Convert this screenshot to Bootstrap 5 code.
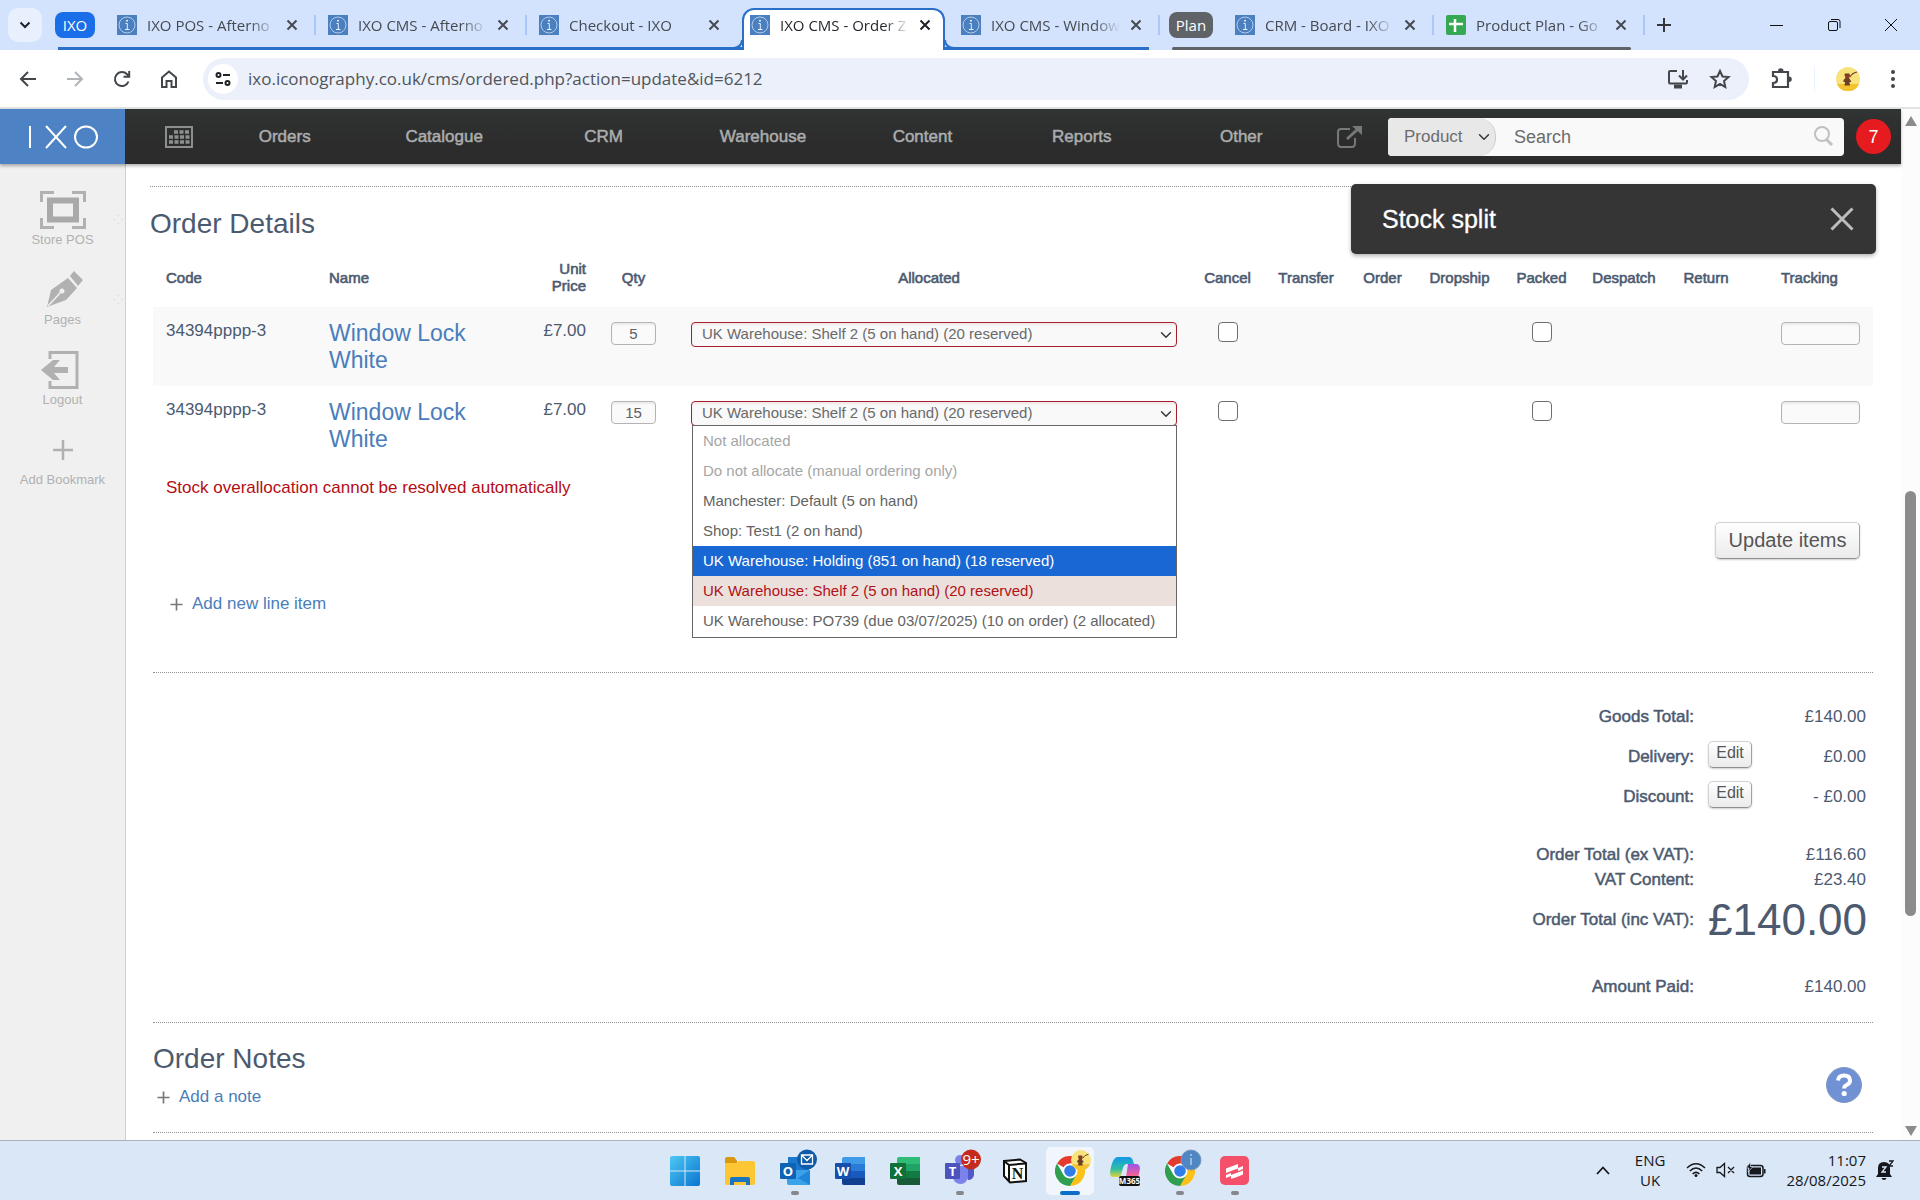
<!DOCTYPE html>
<html lang="en">
<head>
<meta charset="utf-8">
<meta name="viewport" content="width=device-width, initial-scale=1">
<title>IXO CMS - Order</title>
<link href="https://cdn.jsdelivr.net/npm/bootstrap@5.3.0/dist/css/bootstrap.min.css" rel="stylesheet">
<style>
  :root { --ink: #4c5a70; --blue: #4a7dba; --ui: "Open Sans", "Noto Sans", sans-serif; }
  body { font-family: "Liberation Sans", Arial, sans-serif; font-size: 17px; line-height: 24px; color: var(--ink); background: #fff; }
  a { text-decoration: none; color: var(--blue); }
  svg { display: block; flex: none; }
  .shell { height: 100vh; overflow: hidden; }
  button { font-family: inherit; }
  .plain { border: 0; background: none; padding: 0; color: inherit; }

  /* browser chrome */
  .tabstrip { height: 50px; background: #d3e2fd; font-family: var(--ui); font-size: 15px; color: #454a50; padding-left: 8px; }
  .tabsearch { width: 34px; height: 34px; border-radius: 10px; background: #e9f0fd; color: #1f2328; }
  .chip { height: 26px; border-radius: 8px; color: #fff; font-size: 15px; }
  .chip-ixo { background: #1a6ee8; width: 40px; margin-left: 13px; margin-right: 10px; }
  .chip-plan { background: #5f6368; width: 44px; margin-left: 9px; margin-right: 10px; }
  .grp { height: 50px; position: relative; }
  .grp::after { content: ""; position: absolute; left: 16px; right: 11px; bottom: 0; height: 3px; background: #2a70c8; }
  .grp-plan::after { left: 12px; right: 14px; background: #5f6368; border-radius: 2px; }
  .tab { width: 211px; height: 42px; margin-top: 4px; padding: 0 18px 0 12px; gap: 10px; position: relative; }
  .tab-name { flex: 1; overflow: hidden; white-space: nowrap; color: inherit; -webkit-mask-image: linear-gradient(90deg, #000 80%, transparent); }
  .tab.sep::after { content: ""; position: absolute; right: 0; top: 11px; width: 2px; height: 20px; background: #a8c7fa; }
  .tab-on { background: #fff; border: 2px solid #2a70c8; border-bottom: 0; border-radius: 12px 12px 0 0; height: 42px; margin: 8px 4px 0 4px; width: 203px; padding: 0 12px 10px 6px; z-index: 1; color: #1f2328; }
  .tab-on::before, .tab-on::after { content: ""; position: absolute; bottom: 0; width: 10px; height: 10px; border: solid #2a70c8; border-width: 0 0 3px 0; }
  .tab-on::before { left: -11px; border-right-width: 2px; border-bottom-right-radius: 10px; background: #d3e2fd; }
  .tab-on::after { right: -11px; border-left-width: 2px; border-bottom-left-radius: 10px; background: #d3e2fd; }
  .newtab { margin-left: 12px; }
  .winbtns { gap: 40px; padding-right: 21px; color: #111; }
  .toolbar { height: 59px; background: #fff; border-bottom: 2px solid #dfe3e3; padding: 0 19px 0 18px; color: #43474b; }
  .toolbar .icos { gap: 27px; }
  .omnibox { height: 42px; border-radius: 21px; background: #ebf0fa; font-family: var(--ui); font-size: 17px; margin: 0 22px 0 24px; padding: 0 18px 0 5px; gap: 20px; color: #1f2328; }
  .omnibox input { border: 0; background: none; outline: 0; color: #50555b; min-width: 0; margin-left: -10px; }
  .tune { width: 30px; height: 30px; border-radius: 50%; background: #fff; }
  .tools { gap: 21px; }

  /* application header */
  .apphead { height: 55px; background: linear-gradient(#303433, #2c2c2c 60%); box-shadow: 0 2px 3px rgba(0,0,0,.3); position: relative; z-index: 2; }
  .brand { width: 125px; height: 55px; background: #4d83c4; }
  .mainnav { width: 1116px; flex-shrink: 1; margin-left: 12px; }
  .mainnav a { flex: 1; text-align: center; color: #abadad; -webkit-text-stroke: .5px; }
  .searchbar { width: 456px; height: 38px; border-radius: 4px; background: #f9f9f9; overflow: hidden; margin-left: 26px; }
  .searchbar select { width: 108px; height: 38px; border: 0; border-radius: 0 18px 18px 0; border-right: 1px solid #ccc; background-color: #e8e8e8; color: #6c6c6c; font-size: 17px; padding: 0 24px 0 16px; background-size: 12px; background-position: right 5px center; }
  .searchbar input { border: 0; background: none; outline: 0; font-size: 18px; flex: 1; min-width: 0; padding-left: 18px; }
  .searchbar input::placeholder { color: #6c6c6c; }
  .count { width: 35px; height: 35px; border-radius: 50%; background: #e51b20; color: #fff; font-size: 18px; margin-left: 12px; margin-right: 10px; }
  .scroller { width: 19px; background: #fcfcfc; padding: 7px 0 4px; }
  .thumb { width: 11px; height: 425px; border-radius: 6px; background: #8b8b8b; margin-top: 155px; }

  /* side bar */
  .side { width: 126px; background: #f0f0f0; border-right: 1px solid #cfcfcf; padding-top: 25px; }
  .side a { height: 80px; color: #b1b1b1; font-size: 13px; line-height: 18px; position: relative; }
  .side svg { height: 40px; width: 46px; margin-bottom: 2px; }
  .grip { position: absolute; right: 1px; top: 22px; color: #dedede; font-size: 13px; line-height: 18px; }

  /* order page */
  .order { padding: 22px 28px 0 24px; background: #fff; position: relative; }
  .rule { border-top: 1px dotted #909090; }
  .inset { margin-left: 3px; }
  h2 { font-size: 28px; line-height: 34px; font-weight: 400; margin: 0; }
  h2.rule { padding-top: 20px; }
  .items { table-layout: fixed; width: 100%; margin-top: 6px; border-collapse: collapse; }
  .items th { height: 60px; font-weight: 400; font-size: 15px; line-height: 17px; -webkit-text-stroke: .6px; text-align: center; vertical-align: middle; }
  .items td { height: 79px; vertical-align: top; padding: 15px 0 0; text-align: center; line-height: 20px; }
  .items .txt, .items th.txt { text-align: left; padding: 14px 0 0 13px; }
  .items th.txt { padding-top: 0; }
  .items .money { text-align: right; padding: 14px 13px 0 0; }
  .items th.money { padding-top: 0; padding-left: 40px; }
  .items .last { padding: 15px 13px 0 35px; text-align: left; }
  .items th.last { padding-top: 0; padding-right: 0; }
  .items .shade td { background: #f9f9f9; }
  .items .prod { font-size: 23px; line-height: 27px; padding-top: 13px; }
  .items td svg, .items td input, .items td select { display: block; }
  .fld { height: 23px; border: 1px solid #b4b4b4; border-radius: 4px; background: #fafafa; box-shadow: inset 0 2px 2px rgba(0,0,0,.06); font-size: 15px; color: #606060; text-align: center; padding: 0 0 1px; }
  .qty { width: 45px; margin: 0 auto; }
  .alloc { position: relative; margin: 0 13px 0 23px; }
  .alloc select { height: 25px; width: 100%; border: 1px solid #a3212c; border-radius: 4px; background-color: #f9f9f9; box-shadow: inset 0 2px 2px rgba(160,30,40,.08); color: #6a6a6a; font-size: 15px; line-height: 21px; padding: 0 24px 2px 10px; background-size: 12px; background-position: right 4px center; }
  .drop { position: absolute; left: 1px; right: 0; top: 24px; background: #fff; border: 1px solid #666; z-index: 3; color: #636363; font-size: 15px; text-align: left; padding: 0 0 1px; margin: 0; list-style: none; }
  .drop li { line-height: 30px; padding-left: 10px; white-space: nowrap; }
  .drop .off { color: #a6a6a6; }
  .drop .hot { background: #1967d2; color: #fff; }
  .drop .bad { background: #ebe0dc; color: #b01116; }
  .tick { appearance: none; width: 20px; height: 20px; border: 1px solid #6e6e6e; border-radius: 4px; background: #fff; margin: 0 auto; }
  .warn { color: #b40d14; margin: 11px 0 0 13px; }
  .btn-soft { border: 1px solid #d2d2d2; border-right-color: #a0a0a0; border-bottom-color: #8f8f8f; border-radius: 5px; background: linear-gradient(#fff, #ebebeb); color: #555; box-shadow: 0 1px 2px rgba(0,0,0,.2); }
  .upd { font-size: 20px; height: 37px; width: 145px; padding: 0 0 2px; margin: 22px 13px 0 0; }
  .addline { gap: 9px; }
  .newitem { margin: 33px 0 56px 17px; }
  .newnote { margin: 9px 0 0 4px; }
  .totals { width: 460px; padding: 32px 7px 23px 0; margin-left: auto; }
  .totals > div { height: 24px; margin-bottom: 16px; }
  .totals dt { font-weight: 400; -webkit-text-stroke: .5px; }
  .totals dd { width: 172px; margin: 0; padding-left: 14px; }
  .totals .gap-l { margin-bottom: 34px; }
  .totals .gap-s { margin-bottom: 1px; }
  .totals .gap-xl { margin-bottom: 43px; }
  .totals .gap-0 { margin-bottom: 0; }
  .edit { font-size: 16px; line-height: 18px; width: 44px; height: 27px; padding: 0 0 3px; margin-top: -4px; }
  .grand { font-size: 44px; }
  .notes { padding: 19px 11px 23px 0; }
  .help { width: 36px; height: 36px; margin-bottom: 6px; }
  .toast-box { position: absolute; right: 25px; top: 20px; width: 525px; height: 70px; border-radius: 5px; background: #353535; color: #fff; font-size: 25px; padding: 0 22px 0 31px; box-shadow: 0 2px 4px rgba(0,0,0,.3); z-index: 4; -webkit-text-stroke: .3px; }

  /* task bar */
  .taskbar { height: 60px; border-top: 1px solid #a9b4be; background: #d9e7f7; font-family: var(--ui); color: #15181c; position: relative; }
  .apps { gap: 7px; }
  .app { width: 48px; height: 48px; border-radius: 5px; position: relative; margin: 6px 0; }
  .app.on { background: #f1f6fc; }
  .app svg { overflow: visible; }
  .run::after { content: ""; position: absolute; bottom: 0; left: 20px; width: 8px; height: 4px; border-radius: 2px; background: #83878c; }
  .app.on::after { content: ""; position: absolute; bottom: 0; left: 14px; width: 20px; height: 4px; border-radius: 2px; background: #0b6fc7; }
  .tray { position: absolute; right: 26px; top: 0; height: 58px; font-size: 15px; line-height: 20px; }
  .lang { margin: 0 21px 0 25px; }
  .net { gap: 10px; }
  .clock { margin: 0 10px 0 20px; }
</style>
</head>
<body>
<svg width="0" height="0" class="position-absolute">
  <symbol id="fav" viewBox="0 0 20 20"><rect width="20" height="20" fill="#4a7fc0"/><circle cx="10" cy="10" r="8" fill="none" stroke="#b5cbe6"/><path d="M8.500 8.500H10.300V14.500M8 14.500H12.500" fill="none" stroke="#e8f0fa"/><circle cx="10" cy="5.800" r="1" fill="#e8f0fa"/></symbol>
  <symbol id="ex" viewBox="0 0 12 12"><path d="M1.500 1.500 10.500 10.500M10.500 1.500 1.500 10.500" stroke="currentColor" stroke-width="2" fill="none"/></symbol>
  <symbol id="plus" viewBox="0 0 14 14"><path d="M7 .5V13.500M.5 7H13.500" stroke="currentColor" stroke-width="1.800"/></symbol>
  <symbol id="chrome" viewBox="0 0 30 30"><circle cx="15" cy="15" r="15" fill="#fff"/><path d="M15 15 2 7.500A15 15 0 0 1 28 7.500H15Z" fill="#e33b2e"/><path d="M28 7.500A15 15 0 0 1 15 30L21.500 18.700 15 7.500Z" fill="#fbc116"/><path d="M2 7.500A15 15 0 0 0 15 30L21.500 18.700H8.500Z" fill="#2f9e4f"/><circle cx="15" cy="15" r="7.500" fill="#fff"/><circle cx="15" cy="15" r="5.800" fill="#2f7de9"/></symbol>
  <symbol id="mule" viewBox="0 0 24 24"><circle cx="12" cy="12" r="12" fill="#f8e27c"/><path d="M1 17A12 12 0 0 0 23 17Z" fill="#f3c32f"/><path d="M8.500 8 9 6.500H13.500L14 9 13 11 15 14V15H13.500L14 18.500H8.500L9 15H7.500V13L9.500 11Z" fill="#6b4023"/><path d="M14 10Q16 6 21 5" stroke="#6d4a2a" stroke-width="1.200" fill="none"/><path d="M9 9.500H13.500" stroke="#b3341f" stroke-width="1.500"/></symbol>
</svg>

<div class="shell d-flex flex-column">
  <div class="tabstrip d-flex align-items-center flex-shrink-0">
    <button class="plain tabsearch d-flex align-items-center justify-content-center" aria-label="Search tabs"><svg width="12" height="8"><path d="M1.500 1.500 6 6 10.500 1.500" fill="none" stroke="currentColor" stroke-width="2"/></svg></button>
    <div class="grp d-flex align-items-center">
      <button class="plain chip chip-ixo">IXO</button>
      <div class="tab sep d-flex align-items-center align-self-start"><svg width="20" height="20"><use href="#fav"/></svg><a class="tab-name" href="#">IXO POS - Afterno</a><button class="plain" aria-label="Close"><svg width="12" height="12"><use href="#ex"/></svg></button></div>
      <div class="tab sep d-flex align-items-center align-self-start"><svg width="20" height="20"><use href="#fav"/></svg><a class="tab-name" href="#">IXO CMS - Afterno</a><button class="plain" aria-label="Close"><svg width="12" height="12"><use href="#ex"/></svg></button></div>
      <div class="tab d-flex align-items-center align-self-start"><svg width="20" height="20"><use href="#fav"/></svg><a class="tab-name" href="#">Checkout - IXO</a><button class="plain" aria-label="Close"><svg width="12" height="12"><use href="#ex"/></svg></button></div>
      <div class="tab tab-on d-flex align-items-center align-self-start"><svg width="20" height="20"><use href="#fav"/></svg><a class="tab-name" href="#">IXO CMS - Order Z</a><button class="plain" aria-label="Close"><svg width="12" height="12"><use href="#ex"/></svg></button></div>
      <div class="tab sep d-flex align-items-center align-self-start"><svg width="20" height="20"><use href="#fav"/></svg><a class="tab-name" href="#">IXO CMS - Window</a><button class="plain" aria-label="Close"><svg width="12" height="12"><use href="#ex"/></svg></button></div>
    </div>
    <div class="grp grp-plan d-flex align-items-center">
      <button class="plain chip chip-plan">Plan</button>
      <div class="tab sep d-flex align-items-center align-self-start"><svg width="20" height="20"><use href="#fav"/></svg><a class="tab-name" href="#">CRM - Board - IXO</a><button class="plain" aria-label="Close"><svg width="12" height="12"><use href="#ex"/></svg></button></div>
      <div class="tab sep d-flex align-items-center align-self-start"><svg width="20" height="20" viewBox="0 0 20 20"><rect width="20" height="20" rx="2" fill="#34a853"/><path d="M9 4V17M3 9H17" stroke="#fff" stroke-width="2.500"/></svg><a class="tab-name" href="#">Product Plan - Go</a><button class="plain" aria-label="Close"><svg width="12" height="12"><use href="#ex"/></svg></button></div>
    </div>
    <button class="plain newtab" aria-label="New tab"><svg width="14" height="14" viewBox="0 0 14 14"><path d="M7 0V14M0 7H14" stroke="#33373b" stroke-width="2"/></svg></button>
    <div class="winbtns d-flex align-items-center ms-auto">
      <button class="plain" aria-label="Minimise"><svg width="16" height="16"><path d="M1 8.500H14" stroke="currentColor"/></svg></button>
      <button class="plain" aria-label="Restore"><svg width="18" height="16" fill="none" stroke="currentColor"><rect x="3.500" y="4.500" width="9" height="9" rx="1.500"/><path d="M6 2.500H13A2 2 0 0 1 15 4.500V11"/></svg></button>
      <button class="plain" aria-label="Close window"><svg width="16" height="16"><path d="M2 2 14 14M14 2 2 14" stroke="currentColor"/></svg></button>
    </div>
  </div>

  <div class="toolbar d-flex align-items-center flex-shrink-0">
    <div class="icos d-flex">
      <button class="plain" aria-label="Back"><svg width="20" height="20" fill="none" stroke="currentColor" stroke-width="2"><path d="M18 10H3M10 3 3 10 10 17"/></svg></button>
      <button class="plain" aria-label="Forward"><svg width="20" height="20" fill="none" stroke="#b0b4b8" stroke-width="2"><path d="M2 10H17M10 3 17 10 10 17"/></svg></button>
      <button class="plain" aria-label="Reload"><svg width="20" height="20" fill="none" stroke="currentColor" stroke-width="2"><path d="M16.500 12.500A7 7 0 1 1 15 5.200L17 7.500M17.200 2V7.700H11.500"/></svg></button>
      <button class="plain" aria-label="Home"><svg width="20" height="20" fill="none" stroke="currentColor" stroke-width="2"><path d="M3 8.500 10 2.500 17 8.500V18H12.500V12H7.500V18H3Z"/></svg></button>
    </div>
    <div class="omnibox d-flex align-items-center flex-grow-1">
      <span class="tune d-flex align-items-center justify-content-center"><svg width="16" height="14" fill="none" stroke="#1f2328" stroke-width="2"><circle cx="3.500" cy="3" r="2"/><path d="M8 3H15M1 11H8"/><circle cx="12.500" cy="11" r="2"/></svg></span>
      <input class="flex-grow-1 p-0" aria-label="Address" value="ixo.iconography.co.uk/cms/ordered.php?action=update&amp;id=6212">
      <svg width="22" height="20" fill="none" stroke="#43474b" stroke-width="2"><path d="M10 2H3Q2 2 2 3V13Q2 14.500 3 14.500H19Q20 14.500 20 13V11M16 1V10M12 6.500 16 10.500 20 6.500"/><path d="M7 17.500H15" stroke-width="4"/></svg>
      <svg width="22" height="20" viewBox="0 0 22 20"><path d="M11 2 13.500 7.500 19.500 8 15 12 16.300 18 11 14.800 5.700 18 7 12 2.500 8 8.500 7.500Z" fill="none" stroke="#43474b" stroke-width="2"/></svg>
    </div>
    <div class="tools d-flex align-items-center">
      <svg width="22" height="24" viewBox="0 0 22 24"><path d="M2 5H17V20H2V16Q6 16 6 12.500 6 9 2 9Z" fill="none" stroke="#43474b" stroke-width="2.200"/><path d="M7 4A2.700 2.700 0 0 1 12.500 4M18 9.500A2.700 2.700 0 0 1 18 15" fill="#43474b"/></svg>
      <span class="vr" style="background:#a8c7fa"></span>
      <svg width="24" height="24" viewBox="0 0 24 24"><use href="#mule"/></svg>
      <svg class="ms-1" width="16" height="20"><circle cx="8" cy="3" r="2" fill="#43474b"/><circle cx="8" cy="10" r="2" fill="#43474b"/><circle cx="8" cy="17" r="2" fill="#43474b"/></svg>
    </div>
  </div>

  <div class="d-flex flex-grow-1" style="min-height:0">
    <div class="d-flex flex-column flex-grow-1" style="min-width:0">
      <header class="apphead d-flex align-items-center flex-shrink-0">
        <a class="brand d-flex align-items-center justify-content-center" href="#" aria-label="IXO"><svg width="70" height="24" fill="none" stroke="#fff" stroke-width="2"><path d="M2 1V23M18 1 38 23M38 1 18 23"/><ellipse cx="58" cy="12" rx="11" ry="10.500"/></svg></a>
        <a href="#" class="ps-4" aria-label="Calendar"><svg class="ms-3" width="28" height="22" viewBox="0 0 28 22"><rect x="1" y="1" width="26" height="20" fill="none" stroke="#8d8f8f" stroke-width="2"/><path d="M9 6H25M4 11H25M4 16H25" stroke="#8d8f8f" stroke-width="3.500" stroke-dasharray="4 1.500"/></svg></a>
        <nav class="mainnav d-flex"><a href="#">Orders</a><a href="#">Catalogue</a><a href="#">CRM</a><a href="#">Warehouse</a><a href="#">Content</a><a href="#">Reports</a><a href="#">Other</a></nav>
        <a href="#" class="ms-auto" aria-label="Open site"><svg width="25" height="22" viewBox="0 0 25 22" fill="none" stroke="#777979" stroke-width="2"><path d="M13 3H4Q1 3 1 6V17Q1 21 4 21H15Q18 21 18 17V12"/><path d="M10 13 21 3" stroke-width="3"/><path d="M15 0H25V9Z" fill="#777979" stroke="none"/></svg></a>
        <div class="searchbar d-flex align-items-center">
          <select class="form-select" aria-label="Search in"><option>Product</option></select>
          <input type="search" placeholder="Search" aria-label="Search">
          <svg class="me-2" width="24" height="24" fill="none" stroke="#c0c0c0"><circle cx="10" cy="9" r="7" stroke-width="2"/><path d="M14 14 20 20" stroke-width="3"/></svg>
        </div>
        <a class="count d-flex align-items-center justify-content-center" href="#">7</a>
      </header>

      <div class="d-flex flex-grow-1" style="min-height:0">
        <aside class="side flex-shrink-0">
          <a href="#" class="d-flex flex-column align-items-center"><svg viewBox="0 0 46 40"><path d="M1.500 13V3.500H14M32 3.500H44.500V13M44.500 29V38.500H32M14 38.500H1.500V29" fill="none" stroke="currentColor" stroke-width="3"/><rect x="10" y="11.500" width="26" height="19" fill="none" stroke="#a9a9a9" stroke-width="6"/></svg>Store POS<span class="grip">⁘</span></a>
          <a href="#" class="d-flex flex-column align-items-center"><svg viewBox="0 0 46 40"><path d="M7 38 11 21 28 9 37 19 26 31ZM30 7 34 2 43 11 38 17Z" fill="currentColor"/><path d="M8 37 21 23" stroke="#f0f0f0" stroke-width="1.500"/><circle cx="22" cy="22" r="2.500" fill="#f0f0f0"/></svg>Pages<span class="grip">⁘</span></a>
          <a href="#" class="d-flex flex-column align-items-center"><svg viewBox="0 0 46 40"><path d="M10 10V3.500H37V38.500H10V32" fill="none" stroke="currentColor" stroke-width="3"/><path d="M1 21 13 11H20L14 18H28V24H14L20 31H13Z" fill="currentColor"/></svg>Logout</a>
          <a href="#" class="d-flex flex-column align-items-center"><svg viewBox="0 0 46 40"><path d="M23 11V31M13 21H33" stroke="#b1b1b1" stroke-width="2.500"/></svg>Add Bookmark</a>
        </aside>

        <main class="order flex-grow-1" style="min-width:0">
          <h2 class="rule">Order Details</h2>
          <div class="inset">
            <table class="items">
              <colgroup><col width="163"><col width="185"><col width="98"><col width="69"><col><col width="75"><col width="82"><col width="71"><col width="83"><col width="81"><col width="84"><col width="80"><col width="127"></colgroup>
              <thead><tr><th class="txt">Code</th><th class="txt">Name</th><th class="money">Unit Price</th><th>Qty</th><th>Allocated</th><th>Cancel</th><th>Transfer</th><th>Order</th><th>Dropship</th><th>Packed</th><th>Despatch</th><th>Return</th><th class="last">Tracking</th></tr></thead>
              <tbody>
                <tr class="shade"><td class="txt">34394pppp-3</td><td class="txt prod"><a href="#">Window Lock White</a></td><td class="money">£7.00</td>
                  <td><input class="fld qty" aria-label="Qty" value="5"></td>
                  <td><div class="alloc"><select class="form-select" aria-label="Allocated"><option>UK Warehouse: Shelf 2 (5 on hand) (20 reserved)</option></select></div></td>
                  <td><input type="checkbox" class="tick" aria-label="Cancel"></td><td></td><td></td><td></td>
                  <td><input type="checkbox" class="tick" aria-label="Packed"></td><td></td><td></td>
                  <td class="last"><input class="fld w-100" aria-label="Tracking"></td></tr>
                <tr><td class="txt">34394pppp-3</td><td class="txt prod"><a href="#">Window Lock White</a></td><td class="money">£7.00</td>
                  <td><input class="fld qty" aria-label="Qty" value="15"></td>
                  <td><div class="alloc"><select class="form-select" aria-label="Allocated"><option>UK Warehouse: Shelf 2 (5 on hand) (20 reserved)</option></select>
                    <ul class="drop" role="listbox">
                      <li class="off" role="option">Not allocated</li>
                      <li class="off" role="option">Do not allocate (manual ordering only)</li>
                      <li role="option">Manchester: Default (5 on hand)</li>
                      <li role="option">Shop: Test1 (2 on hand)</li>
                      <li class="hot" role="option">UK Warehouse: Holding (851 on hand) (18 reserved)</li>
                      <li class="bad" role="option">UK Warehouse: Shelf 2 (5 on hand) (20 reserved)</li>
                      <li role="option">UK Warehouse: PO739 (due 03/07/2025) (10 on order) (2 allocated)</li>
                    </ul></div></td>
                  <td><input type="checkbox" class="tick" aria-label="Cancel"></td><td></td><td></td><td></td>
                  <td><input type="checkbox" class="tick" aria-label="Packed"></td><td></td><td></td>
                  <td class="last"><input class="fld w-100" aria-label="Tracking"></td></tr>
              </tbody>
            </table>
            <p class="warn">Stock overallocation cannot be resolved automatically</p>
            <div class="text-end"><button class="btn btn-soft upd">Update items</button></div>
            <a class="addline newitem d-flex align-items-center" href="#"><svg width="13" height="13" color="#777"><use href="#plus"/></svg>Add new line item</a>

            <div class="rule">
              <dl class="totals mb-0">
                <div class="d-flex justify-content-end"><dt>Goods Total:</dt><dd class="text-end">£140.00</dd></div>
                <div class="d-flex justify-content-end"><dt>Delivery:</dt><dd class="d-flex justify-content-between"><button class="btn btn-soft edit">Edit</button>£0.00</dd></div>
                <div class="d-flex justify-content-end gap-l"><dt>Discount:</dt><dd class="d-flex justify-content-between"><button class="btn btn-soft edit">Edit</button>- £0.00</dd></div>
                <div class="d-flex justify-content-end gap-s"><dt>Order Total (ex VAT):</dt><dd class="text-end">£116.60</dd></div>
                <div class="d-flex justify-content-end"><dt>VAT Content:</dt><dd class="text-end">£23.40</dd></div>
                <div class="d-flex justify-content-end align-items-center gap-xl"><dt>Order Total (inc VAT):</dt><dd class="text-end grand">£140.00</dd></div>
                <div class="d-flex justify-content-end gap-0"><dt>Amount Paid:</dt><dd class="text-end">£140.00</dd></div>
              </dl>
            </div>

            <section class="rule notes d-flex justify-content-between align-items-end">
              <div>
                <h2>Order Notes</h2>
                <a class="addline newnote d-flex align-items-center" href="#"><svg width="13" height="13" color="#777"><use href="#plus"/></svg>Add a note</a>
              </div>
              <button class="plain help" aria-label="Help"><svg width="36" height="36"><circle cx="18" cy="18" r="17.500" fill="#7092d4" stroke="#8399c0"/><path d="M12 13.500Q12.500 8.500 18 8.500 24 8.500 24 13.500 24 16.500 20.500 18 18.200 19 18.200 21.500" fill="none" stroke="#fff" stroke-width="4"/><circle cx="18.200" cy="26.500" r="2.600" fill="#fff"/></svg></button>
            </section>
            <div class="rule"></div>
          </div>
          <div class="toast-box d-flex align-items-center justify-content-between" role="alert">Stock split<button class="plain" aria-label="Dismiss"><svg width="24" height="24"><path d="M1.500 1.500 22.500 22.500M22.500 1.500 1.500 22.500" stroke="#bdbdbd" stroke-width="3"/></svg></button></div>
        </main>
      </div>
    </div>
    <div class="scroller d-flex flex-column align-items-center justify-content-between flex-shrink-0">
      <svg width="12" height="10"><path d="M6 0 12 10H0Z" fill="#8b8b8b"/></svg>
      <div class="thumb"></div>
      <svg width="12" height="10"><path d="M6 10 12 0H0Z" fill="#8b8b8b"/></svg>
    </div>
  </div>

  <footer class="taskbar flex-shrink-0">
    <div class="apps d-flex justify-content-center">
      <a href="#" class="app d-flex align-items-center justify-content-center" aria-label="Start"><svg width="30" height="30" viewBox="0 0 30 30"><defs><linearGradient id="w" x2="1" y2="1"><stop stop-color="#4cc8f4"/><stop offset="1" stop-color="#0a74cf"/></linearGradient></defs><path d="M2 0H14.500V14.500H0V2Q0 0 2 0ZM15.500 0H28Q30 0 30 2V14.500H15.500ZM0 15.500H14.500V30H2Q0 30 0 28ZM15.500 15.500H30V28Q30 30 28 30H15.500Z" fill="url(#w)"/></svg></a>
      <a href="#" class="app d-flex align-items-center justify-content-center" aria-label="Explorer"><svg width="30" height="28" viewBox="0 0 30 28"><path d="M0 2Q0 0 2 0H9L12 3.500V9H0Z" fill="#d9980f"/><path d="M0 6H12L14 4H28Q30 4 30 6V26Q30 28 28 28H2Q0 28 0 26Z" fill="#fcc634"/><path d="M5 28V22Q5 20 7 20H23Q25 20 25 22V28H21V25H9V28Z" fill="#1a74c0"/></svg></a>
      <a href="#" class="app run d-flex align-items-center justify-content-center" aria-label="Outlook"><svg width="30" height="28" viewBox="0 0 30 28"><rect x="8" width="21" height="20" fill="#1a78cf"/><path d="M7 13H30V28H9Q7 28 7 26Z" fill="#3ba2ea"/><path d="M30 13 18 21 30 28Z" fill="#1f86d8"/><rect y="6" width="16" height="16" rx="1" fill="#0f63b5"/><text x="8" y="19" font-size="13" font-weight="700" fill="#fff" text-anchor="middle">O</text><circle cx="27" cy="2.500" r="10" fill="#0f5ba8"/><path d="M21.500-2H32.500V7H21.500ZM21.500-2 27 3.500 32.500-2" fill="none" stroke="#fff" stroke-width="1.300"/></svg></a>
      <a href="#" class="app d-flex align-items-center justify-content-center" aria-label="Word"><svg width="30" height="28" viewBox="0 0 30 28"><path d="M7 2Q7 0 9 0H30V7H7Z" fill="#3f9ae8"/><path d="M7 7H30V14H7Z" fill="#2b7cd6"/><path d="M7 14H30V21H7Z" fill="#185abd"/><path d="M7 21H30V28H9Q7 28 7 26Z" fill="#103f91"/><rect y="6" width="16" height="16" rx="1" fill="#164fae"/><text x="8" y="19" font-size="13" font-weight="700" fill="#fff" text-anchor="middle">W</text></svg></a>
      <a href="#" class="app d-flex align-items-center justify-content-center" aria-label="Excel"><svg width="30" height="28" viewBox="0 0 30 28"><path d="M7 2Q7 0 9 0H30V7H7Z" fill="#2fbd75"/><path d="M7 7H30V14H7Z" fill="#21a366"/><path d="M7 14H30V21H7Z" fill="#107c41"/><path d="M7 21H30V28H9Q7 28 7 26Z" fill="#185c37"/><rect y="6" width="16" height="16" rx="1" fill="#0f7039"/><text x="8" y="19" font-size="13" font-weight="700" fill="#fff" text-anchor="middle">X</text></svg></a>
      <a href="#" class="app run d-flex align-items-center justify-content-center" aria-label="Teams"><svg width="30" height="28" viewBox="0 0 30 28"><circle cx="15" cy="3" r="5" fill="#7b83eb"/><path d="M18 9H29V18Q28 23 23 23Z" fill="#5059c9"/><path d="M8 9H23V19Q22 27 15.500 27 9 27 8 20Z" fill="#7b83eb"/><rect y="6" width="15" height="16" rx="1" fill="#4b53bc"/><text x="7.500" y="19" font-size="13" font-weight="700" fill="#fff" text-anchor="middle">T</text><circle cx="26" cy="2.500" r="10" fill="#c42b1c"/><text x="26" y="8" font-size="15" fill="#fff" text-anchor="middle">9+</text></svg></a>
      <a href="#" class="app d-flex align-items-center justify-content-center" aria-label="Notion"><svg width="24" height="26" viewBox="0 0 24 26"><path d="M1 3 17 1.500 23 5V23L7 24.500 1 18Z" fill="#fff" stroke="#111" stroke-width="2"/><path d="M1 3 6 7 22.500 5.500M6 7V24" fill="none" stroke="#111" stroke-width="2"/><text x="14.500" y="21" font-size="16" font-weight="700" font-family="Liberation Serif, serif" fill="#111" text-anchor="middle">N</text></svg></a>
      <a href="#" class="app on d-flex align-items-center justify-content-center" aria-label="Chrome"><svg width="30" height="30" viewBox="0 0 30 30"><use href="#chrome" width="30" height="30"/><use href="#mule" x="16" y="-6" width="20" height="20"/></svg></a>
      <a href="#" class="app d-flex align-items-center justify-content-center" aria-label="Copilot"><svg width="30" height="30" viewBox="0 0 30 30"><defs><linearGradient id="c1" x2="0" y2="1"><stop stop-color="#1597e6"/><stop offset=".6" stop-color="#2ebfa5"/><stop offset="1" stop-color="#e8d23a"/></linearGradient><linearGradient id="c2" x2="0" y2="1"><stop stop-color="#9a55ea"/><stop offset=".6" stop-color="#f0609a"/><stop offset="1" stop-color="#f7994a"/></linearGradient></defs><path d="M8 1H19Q22 1 23 5L24 8H17Q14 8 13 12L11 19Q10 21 7 21H3Q0 21 0 17Q2 1 8 1Z" fill="url(#c1)"/><path d="M18 8H26Q30 8 30 13 28 26 22 26H12Q15 25 16 21Z" fill="url(#c2)"/><rect x="9" y="20" width="21" height="10" rx="2" fill="#111"/><text x="19.500" y="28" font-size="8" font-weight="700" fill="#fff" text-anchor="middle">M365</text></svg></a>
      <a href="#" class="app run d-flex align-items-center justify-content-center" aria-label="Chrome IXO"><svg width="30" height="30" viewBox="0 0 30 30"><use href="#chrome" width="30" height="30"/><circle cx="26" cy="4" r="10" fill="#4f86c4" stroke="#7f98b5"/><path d="M26 2V9M26-2V0" stroke="#b5cbe6" stroke-width="1.500"/></svg></a>
      <a href="#" class="app run d-flex align-items-center justify-content-center" aria-label="App"><svg width="30" height="30" viewBox="0 0 30 30"><rect width="29" height="29" rx="5" fill="#f4506a"/><path d="M6 12.500 18 8V12.500L11 15 6 17ZM11 19 23 14.500V18.500L17 21 11 23ZM18 12 23 10V13L18 15ZM6 19 11 17V20L6 22Z" fill="#fff"/></svg></a>
    </div>
    <div class="tray d-flex align-items-center">
      <svg width="14" height="9"><path d="M1 8 7 1.500 13 8" fill="none" stroke="currentColor" stroke-width="1.800"/></svg>
      <div class="lang text-center">ENG<br>UK</div>
      <div class="net d-flex">
        <svg width="20" height="16" viewBox="0 0 20 16" fill="none" stroke="currentColor" stroke-width="1.500"><path d="M1 6Q10-2.500 19 6M3.800 9Q10 3 16.200 9M6.600 12Q10 8.800 13.400 12"/><circle cx="10" cy="13.500" r="1.500" fill="currentColor" stroke="none"/></svg>
        <svg width="20" height="16" viewBox="0 0 20 16" fill="none" stroke="currentColor" stroke-width="1.300"><path d="M1 5.500H4L8.500 1.500V14.500L4 10.500H1ZM12 5 18 11M18 5 12 11"/></svg>
        <svg width="20" height="16" viewBox="0 0 20 16"><rect x="1.500" y="3.500" width="15.500" height="11" rx="2.500" fill="none" stroke="currentColor" stroke-width="1.500"/><rect x="3.500" y="5.500" width="11.500" height="7" fill="currentColor"/><path d="M18 7H19.500V11.500H18Z" fill="currentColor"/><path d="M4.500 0 0 6H3L2 10 7 4.500H4.500Z" fill="currentColor" stroke="#d9e7f7" stroke-width=".7"/></svg>
      </div>
      <div class="clock text-end">11:07<br>28/08/2025</div>
      <svg width="18" height="20" viewBox="0 0 18 20"><path d="M2 14V8Q2 2 8 2 14 2 14 8V14L16 17H0ZM5.500 18H10.500Q10 20 8 20 6 20 5.500 18Z" fill="currentColor"/><path d="M6 7H10L6 12H10" stroke="#d9e7f7" stroke-width="1.300" fill="none"/><path d="M13 1H17L13 6H17" stroke="currentColor" stroke-width="1.300" fill="none"/></svg>
    </div>
  </footer>
</div>
<script src="https://cdn.jsdelivr.net/npm/bootstrap@5.3.0/dist/js/bootstrap.bundle.min.js"></script>
</body>
</html>
